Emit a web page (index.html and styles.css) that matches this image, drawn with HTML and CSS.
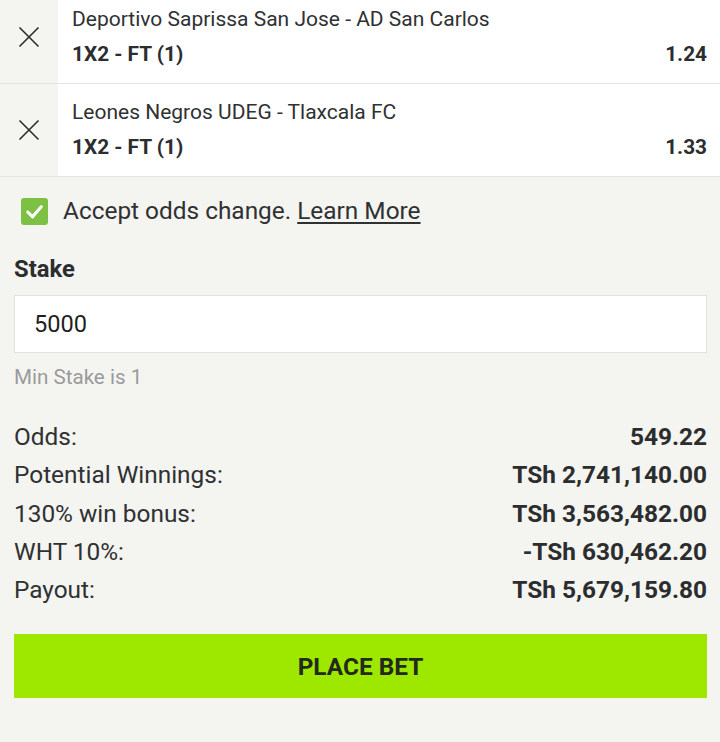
FILE: index.html
```html
<!DOCTYPE html>
<html>
<head>
<meta charset="utf-8">
<link rel="stylesheet" href="styles.css">
</head>
<body>
<div class="slip">
  <div class="bets">
    <div class="bet">
      <div class="bet-remove">
        <svg width="22" height="22" viewBox="0 0 22 22"><path d="M1.5 1.5L20.5 20.5M20.5 1.5L1.5 20.5" stroke="#2b2b2b" stroke-width="1.6" fill="none"/></svg>
      </div>
      <div class="bet-body">
        <div class="bet-match">Deportivo Saprissa San Jose - AD San Carlos</div>
        <div class="bet-line"><span>1X2 - FT (1)</span><span>1.24</span></div>
      </div>
    </div>
    <div class="bet">
      <div class="bet-remove">
        <svg width="22" height="22" viewBox="0 0 22 22"><path d="M1.5 1.5L20.5 20.5M20.5 1.5L1.5 20.5" stroke="#2b2b2b" stroke-width="1.6" fill="none"/></svg>
      </div>
      <div class="bet-body">
        <div class="bet-match">Leones Negros UDEG - Tlaxcala FC</div>
        <div class="bet-line"><span>1X2 - FT (1)</span><span>1.33</span></div>
      </div>
    </div>
  </div>

  <div class="form">
    <label class="accept">
      <span class="checkbox">
        <svg width="27" height="27" viewBox="0 0 28 28"><path d="M7 14.5L12 19.5L21 9" stroke="#fff" stroke-width="3.2" fill="none" stroke-linecap="round" stroke-linejoin="round"/></svg>
      </span>
      <span>Accept odds change. <a class="learn">Learn More</a></span>
    </label>

    <div class="stake-label">Stake</div>
    <div class="stake-input">5000</div>
    <div class="stake-hint">Min Stake is 1</div>

    <div class="summary">
      <div class="sum-row"><span>Odds:</span><b>549.22</b></div>
      <div class="sum-row"><span>Potential Winnings:</span><b>TSh 2,741,140.00</b></div>
      <div class="sum-row"><span>130% win bonus:</span><b>TSh 3,563,482.00</b></div>
      <div class="sum-row"><span>WHT 10%:</span><b>-TSh 630,462.20</b></div>
      <div class="sum-row"><span>Payout:</span><b>TSh 5,679,159.80</b></div>
    </div>

    <button class="place">PLACE BET</button>
  </div>
</div>
</body>
</html>
```
FILE: styles.css
```css
html, body {
  margin: 0;
  padding: 0;
  background: #f4f4f0;
}
body {
  font-family: Roboto, "Noto Sans", sans-serif;
  color: #2b2d2e;
  width: 720px;
  height: 742px;
  overflow: hidden;
}
.slip {
  display: flex;
  flex-direction: column;
}
.bets {
  margin-top: -9px;
}
.bet {
  display: flex;
  height: 92px;
  border-bottom: 1px solid #e3e3df;
}
.bet-remove {
  width: 58px;
  flex: none;
  display: flex;
  align-items: center;
  justify-content: center;
  background: #f4f4f0;
}
.bet-body {
  flex: 1;
  background: #fff;
  padding: 16px 13px 0 14px;
  display: flex;
  flex-direction: column;
}
.bet-match {
  font-size: 21px;
  line-height: 24px;
  color: #2f3133;
}
.bet-line {
  display: flex;
  justify-content: space-between;
  font-weight: 700;
  font-size: 20.8px;
  line-height: 24px;
  margin-top: 11px;
  color: #2b2d2e;
}
.form {
  padding: 0 13px 0 14px;
}
.accept {
  display: flex;
  align-items: center;
  gap: 15px;
  margin-top: 20px;
  padding-left: 7px;
  font-size: 24.4px;
  line-height: 28px;
  color: #2f3133;
}
.checkbox {
  width: 27px;
  height: 27px;
  border-radius: 3px;
  background: #7cc143;
  display: flex;
  align-items: center;
  justify-content: center;
  flex: none;
}
.learn {
  text-decoration: underline;
  text-underline-offset: 3px;
  text-decoration-thickness: 1.5px;
  color: #2f3133;
}
.stake-label {
  font-weight: 700;
  font-size: 23.8px;
  line-height: 28px;
  margin-top: 30px;
}
.stake-input {
  box-sizing: border-box;
  margin-top: 12px;
  height: 58px;
  background: #fff;
  border: 1px solid #e2e2de;
  display: flex;
  align-items: center;
  padding-left: 19px;
  font-size: 23.6px;
  color: #1f1f1f;
}
.stake-hint {
  margin-top: 12px;
  color: #9a9b9c;
  font-size: 20.6px;
  line-height: 24px;
}
.summary {
  margin-top: 34px;
  display: flex;
  flex-direction: column;
  gap: 10.3px;
}
.sum-row {
  display: flex;
  justify-content: space-between;
  font-size: 24.4px;
  line-height: 28px;
  color: #2f3133;
}
.sum-row b {
  font-weight: 700;
  color: #2b2d2e;
}
.place {
  margin-top: 30px;
  width: 100%;
  height: 64px;
  border: 0;
  background: #9ee800;
  font-family: Roboto, "Noto Sans", sans-serif;
  font-weight: 700;
  font-size: 24.4px;
  color: #232a1c;
  display: block;
}
```
